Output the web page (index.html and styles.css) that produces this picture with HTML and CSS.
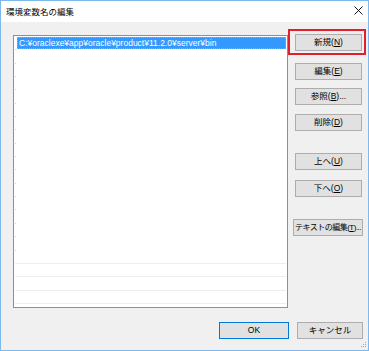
FILE: index.html
```html
<!DOCTYPE html>
<html lang="ja">
<head>
  <meta charset="UTF-8">
  <title>環境変数名の編集</title>
  <link rel="stylesheet" href="styles.css">
</head>
<body>
  <div class="window">
    <div class="titlebar">
      <span class="title">環境変数名の編集</span>
      <svg class="close" width="9" height="9" viewBox="0 0 9 9">
        <path d="M0.5 0.5 L8.5 8.5 M8.5 0.5 L0.5 8.5" stroke="#111" stroke-width="1" fill="none"/>
      </svg>
    </div>
    <div class="content">
      <div class="main">
        <div class="list">
          <div class="row selected"><span class="item">C:¥oraclexe¥app¥oracle¥product¥11.2.0¥server¥bin</span></div>
          <div class="row"></div>
          <div class="row"></div>
          <div class="row"></div>
          <div class="row"></div>
          <div class="row"></div>
          <div class="row"></div>
          <div class="row"></div>
          <div class="row"></div>
          <div class="row"></div>
          <div class="row"></div>
          <div class="row"></div>
          <div class="row"></div>
          <div class="row"></div>
          <div class="row"></div>
          <div class="row"></div>
          <div class="row line"></div>
          <div class="row line"></div>
          <div class="row line"></div>
          <div class="row line"></div>
        </div>
        <div class="side">
          <div class="new-wrap">
            <button class="btn">新規(<u>N</u>)</button>
            <span class="mark"></span>
          </div>
          <button class="btn btn-edit">編集(<u>E</u>)</button>
          <button class="btn btn-gap8">参照(<u>B</u>)...</button>
          <button class="btn btn-gap9">削除(<u>D</u>)</button>
          <button class="btn btn-group">上へ(<u>U</u>)</button>
          <button class="btn btn-gap10">下へ(<u>O</u>)</button>
          <button class="btn btn-group btn-wide">テキストの編集(<u>T</u>)...</button>
        </div>
      </div>
      <div class="footer">
        <button class="btn btn-ok">OK</button>
        <button class="btn btn-cancel">キャンセル</button>
      </div>
    </div>
    <svg class="grip" width="7" height="7" viewBox="0 0 7 7">
      <rect x="5" y="0" width="1" height="1" fill="#a8a8a8"/>
      <rect x="3" y="2" width="1" height="1" fill="#a8a8a8"/>
      <rect x="5" y="2" width="1" height="1" fill="#a8a8a8"/>
      <rect x="1" y="4" width="1" height="1" fill="#a8a8a8"/>
      <rect x="3" y="4" width="1" height="1" fill="#a8a8a8"/>
      <rect x="5" y="4" width="1" height="1" fill="#a8a8a8"/>
    </svg>
  </div>
</body>
</html>
```

FILE: styles.css
```css
body {
  margin: 0;
  font-family: "Liberation Sans", "Noto Sans CJK JP", sans-serif;
  font-size: 8.5px;
  color: #000;
}

.window {
  position: relative;
  width: 369px;
  height: 351px;
  box-sizing: border-box;
  border: 1px solid #7db9ec;
  background-color: #f0f0f0;
  display: flex;
  flex-direction: column;
}

.titlebar {
  height: 21px;
  background-color: #fff;
  display: flex;
  align-items: center;
  justify-content: space-between;
  padding: 0 5px 0 5px;
}

.title {
  font-size: 8.5px;
  margin-top: -1px;
}

.close {
  margin-top: -3px;
}

.content {
  display: flex;
  flex-direction: column;
  flex: 1;
}

.main {
  display: flex;
  padding: 12px 0 0 12px;
  gap: 7px;
}

.list {
  width: 275px;
  height: 273px;
  box-sizing: border-box;
  margin-top: 1px;
  border: 1px solid #8c8f96;
  background-color: #fff;
  padding: 0 1px 0 1px;
}

.row {
  height: 13.35px;
  box-sizing: border-box;
  position: relative;
}

.row::before {
  content: "";
  position: absolute;
  left: 0;
  bottom: 0;
  width: 1px;
  height: 1px;
  background-color: #d6d6d6;
}

.row.line {
  border-bottom: 1px solid #eeeeee;
}

.row.line::before {
  display: none;
}

.selected .item {
  display: block;
  margin: 1px 0 0 2px;
  height: 12px;
  line-height: 12px;
  padding-left: 2px;
  background-color: #3399ff;
  color: #fff;
  outline: 1px dotted #d9a050;
  outline-offset: -1px;
  white-space: nowrap;
}

.side {
  display: flex;
  flex-direction: column;
  width: 67px;
}

.btn {
  height: 17px;
  width: 67px;
  padding: 0;
  box-sizing: border-box;
  border: 1px solid #adadad;
  background-color: #e1e1e1;
  font-family: inherit;
  font-size: 8.5px;
  color: #000;
  line-height: 15px;
  white-space: nowrap;
}

.btn u {
  text-decoration: underline;
  text-underline-offset: 1px;
}

.new-wrap {
  position: relative;
}

.mark {
  position: absolute;
  left: -7px;
  right: -4px;
  top: -5px;
  bottom: -4px;
  border: 2px solid #e2202c;
}

.btn-edit {
  margin-top: 12px;
}

.btn-gap8 {
  margin-top: 8px;
}

.btn-gap9 {
  margin-top: 9px;
}

.btn-gap10 {
  margin-top: 10px;
}

.btn-group {
  margin-top: 22px;
}

.btn-wide {
  width: 70px;
  margin-left: -2px;
  font-size: 8px;
  letter-spacing: -0.5px;
  overflow: hidden;
}

.footer {
  display: flex;
  justify-content: flex-end;
  gap: 8px;
  padding: 14px 5px 0 0;
}

.btn-ok {
  width: 70px;
  border-color: #0078d7;
}

.btn-cancel {
  width: 66px;
}

.grip {
  position: absolute;
  right: 1px;
  bottom: 1px;
}
```
